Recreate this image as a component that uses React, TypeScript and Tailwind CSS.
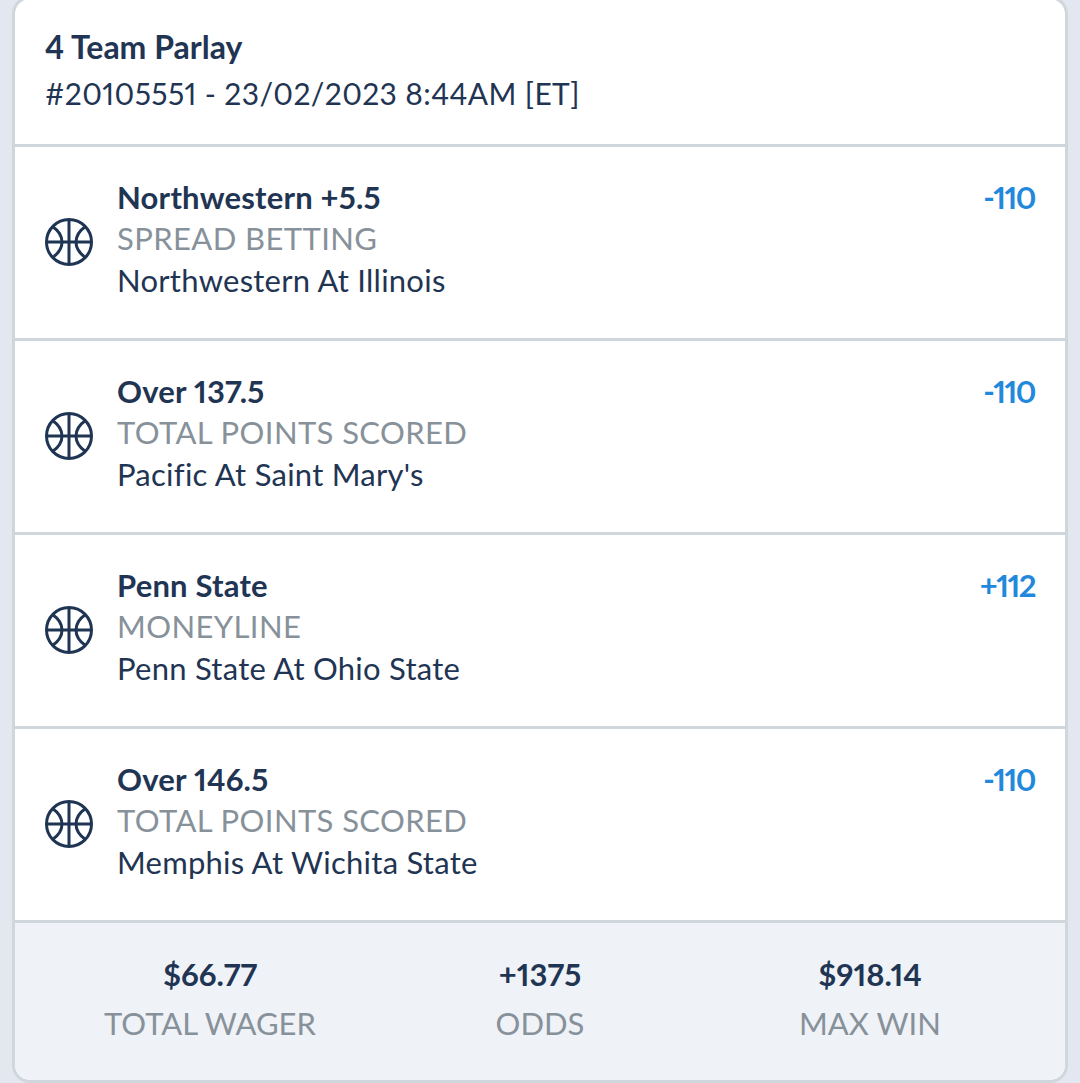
const legs = [
  { pick: "Northwestern +5.5", market: "SPREAD BETTING", game: "Northwestern At Illinois", odds: "-110" },
  { pick: "Over 137.5", market: "TOTAL POINTS SCORED", game: "Pacific At Saint Mary's", odds: "-110" },
  { pick: "Penn State", market: "MONEYLINE", game: "Penn State At Ohio State", odds: "+112" },
  { pick: "Over 146.5", market: "TOTAL POINTS SCORED", game: "Memphis At Wichita State", odds: "-110" },
];

const totals = [
  { value: "$66.77", label: "TOTAL WAGER" },
  { value: "+1375", label: "ODDS" },
  { value: "$918.14", label: "MAX WIN" },
];

const Basketball = () => (
  <svg viewBox="0 0 48 48" className="mb-[1px] h-12 w-12 shrink-0" fill="none" stroke="#1f3553" strokeWidth="3">
    <circle cx="24" cy="24" r="22.5" />
    <path d="M1.5 24H46.5M24 1.5V46.5" />
    <path d="M7.5 8.5C14 13 17 18 17 24C17 30 14 35 7.5 39.5" />
    <path d="M40.5 8.5C34 13 31 18 31 24C31 30 34 35 40.5 39.5" />
  </svg>
);

export default function App() {
  return (
    <div className="h-[1083px] overflow-hidden bg-[#e3e7ef] px-[12px] font-['Lato',sans-serif] text-[#1f3553] proportional-nums">
      <div className="-mt-1 h-[1087px] overflow-hidden rounded-[18px] border-[3px] border-[#cfd6dc] bg-white">
        <div className="h-[148px] border-b-[3px] border-[#cfd6dc] pl-[30px] pt-[28px]">
          <div className="text-[32px] font-bold leading-[40px]">4 Team Parlay</div>
          <div className="mt-1 text-[30px] leading-[44px] tracking-[0.38px]">#20105551 - 23/02/2023 8:44AM [ET]</div>
        </div>
        {legs.map((leg) => (
          <div key={leg.market + leg.game} className="flex h-[194px] items-center border-b-[3px] border-[#cfd6dc] px-[30px]">
            <Basketball />
            <div className="mb-[6px] ml-[24px] flex-1">
              <div className="-mt-[1px] mb-[1px] text-[31px] font-bold leading-[40px] tracking-[0.2px]">{leg.pick}</div>
              <div className="text-[31px] leading-[41px] tracking-[0.4px] text-[#87919a]">{leg.market}</div>
              <div className="text-[31px] leading-[42px] tracking-[0.25px]">{leg.game}</div>
            </div>
            <div className="mb-[91px] text-[31px] font-bold leading-[40px] tracking-[-1.5px] text-[#2288dc]">{leg.odds}</div>
          </div>
        ))}
        <div className="grid h-[157px] grid-cols-3 bg-[#eff2f7] px-[30px] pt-[30px] text-center">
          {totals.map((t) => (
            <div key={t.label}>
              <div className="text-[31px] font-bold leading-[42px]">{t.value}</div>
              <div className="mt-[7px] text-[31px] leading-[42px] text-[#87919a]">{t.label}</div>
            </div>
          ))}
        </div>
      </div>
    </div>
  );
}
